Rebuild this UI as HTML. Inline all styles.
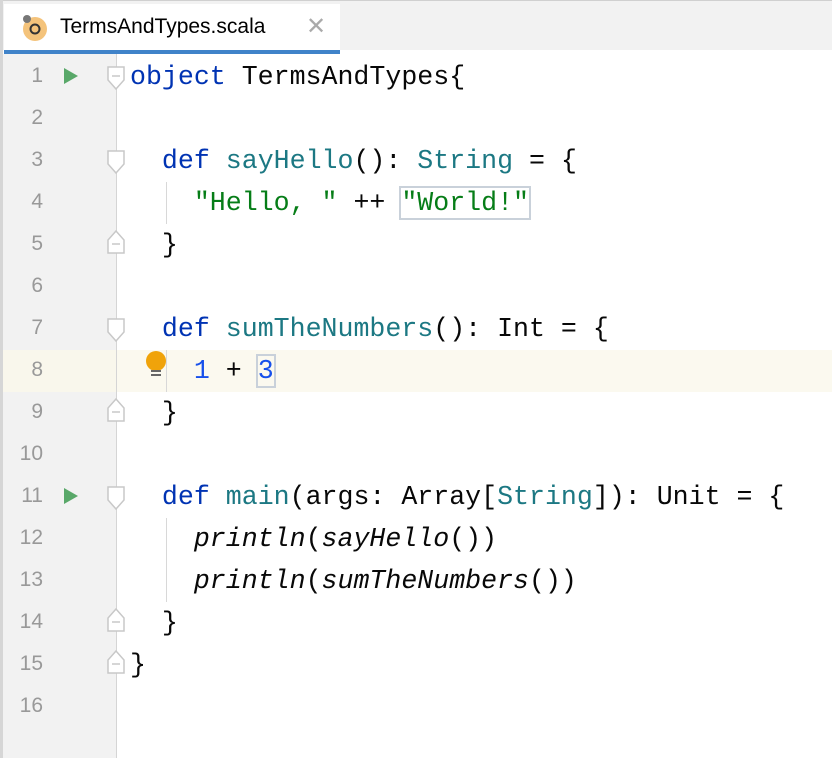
<!DOCTYPE html><html><head><style>
body{margin:0;width:832px;height:758px;background:#fff;overflow:hidden;position:relative;font-family:"Liberation Mono",monospace}
.tabbar{position:absolute;left:0;top:0;width:832px;height:50px;background:#f2f2f2;border-top:1px solid #d0d0d0;box-sizing:border-box}
.tab{position:absolute;left:4px;top:4px;width:336px;height:46px;background:#fff}
.tabline{position:absolute;left:4px;top:50px;width:336px;height:4px;background:#4083c9}
.gutter{position:absolute;left:0;top:54px;width:116px;height:704px;background:#f2f2f2;border-right:1px solid #d5d5d5}
.lstrip{position:absolute;left:0;top:0;width:3px;height:758px;background:#d6d6d6}
.ln{position:absolute;left:0;width:43px;text-align:right;font-size:21px;color:#999;font-family:"Liberation Sans",sans-serif}
.code{position:absolute;left:130px;font-size:26.6px;white-space:pre;color:#080808;line-height:42px}
.k{color:#0033b3}.s{color:#067d17}.t{color:#1c7883}.n{color:#1750eb}.i{font-style:italic}
.box{outline:2px solid #c9d1da;outline-offset:0}
.play{position:absolute;left:64px;width:0;height:0;border-left:14px solid #59a869;border-top:8.5px solid transparent;border-bottom:8.5px solid transparent}
.guide{position:absolute;width:1px;background:#d8d8d8}
</style></head><body>
<div class="tabbar"></div>
<div class="tab">
<svg style="position:absolute;left:16px;top:9px" width="30" height="30"><circle cx="15" cy="16" r="12" fill="#f4c37b"/><circle cx="15" cy="16" r="4.5" fill="none" stroke="#333" stroke-width="2"/><circle cx="7" cy="6" r="4" fill="#777"/></svg>
<div style="position:absolute;left:56px;top:11px;font-family:'Liberation Sans',sans-serif;font-size:21px;color:#000">TermsAndTypes.scala</div>
<div style="position:absolute;left:302px;top:8px;font-family:'Liberation Sans',sans-serif;font-size:24px;color:#aaa">✕</div>
</div>
<div class="tabline"></div>
<div class="gutter"></div>
<div class="lstrip"></div>
<div style="position:absolute;left:117px;top:350px;width:715px;height:42px;background:#fbf9ef"></div>
<div style="position:absolute;left:3px;top:350px;width:113px;height:42px;background:#f9f7ec"></div>
<div class="guide" style="left:166px;top:182px;height:42px"></div>
<div class="guide" style="left:166px;top:350px;height:42px"></div>
<div class="guide" style="left:166px;top:518px;height:84px"></div>
<div id="lns"></div>
<div class="play" style="top:68px"></div>
<div class="play" style="top:488px"></div>
<svg style="position:absolute;left:143px;top:350px" width="26" height="30"><circle cx="13" cy="11" r="10" fill="#f0a30a"/><rect x="8" y="20" width="10" height="2" fill="#666"/><rect x="8" y="24" width="10" height="2" fill="#666"/></svg>
<svg style="position:absolute;left:0;top:0" width="832" height="758">
<g fill="#fff" stroke="#c8c8c8" stroke-width="1.5">
<path d="M108 67h16v13l-8 9l-8-9z"/><path d="M108 151h16v13l-8 9l-8-9z"/><path d="M108 319h16v13l-8 9l-8-9z"/><path d="M108 487h16v13l-8 9l-8-9z"/>
<path d="M108 253h16v-13l-8-9l-8 9z"/><path d="M108 421h16v-13l-8-9l-8 9z"/><path d="M108 631h16v-13l-8-9l-8 9z"/><path d="M108 673h16v-13l-8-9l-8 9z"/>
</g>
<g stroke="#c8c8c8" stroke-width="1.5"><path d="M112 76h8M112 244h8M112 412h8M112 622h8M112 664h8"/></g>
</svg>
<div class="code" style="top:56px"><span class="k">object</span> TermsAndTypes{

  <span class="k">def</span> <span class="t">sayHello</span>(): <span class="t">String</span> = {
    <span class="s">"Hello, "</span> ++ <span class="s box">"World!"</span>
  }

  <span class="k">def</span> <span class="t">sumTheNumbers</span>(): Int = {
    <span class="n">1</span> + <span class="n box">3</span>
  }

  <span class="k">def</span> <span class="t">main</span>(args: Array[<span class="t">String</span>]): Unit = {
    <span class="i">println</span>(<span class="i">sayHello</span>())
    <span class="i">println</span>(<span class="i">sumTheNumbers</span>())
  }
}
</div>
<script>
var h='';for(var i=1;i<=16;i++){h+='<div class="ln" style="top:'+(56+42*(i-1)+8)+'px">'+i+'</div>'}
document.getElementById('lns').innerHTML=h;
</script>
</body></html>
